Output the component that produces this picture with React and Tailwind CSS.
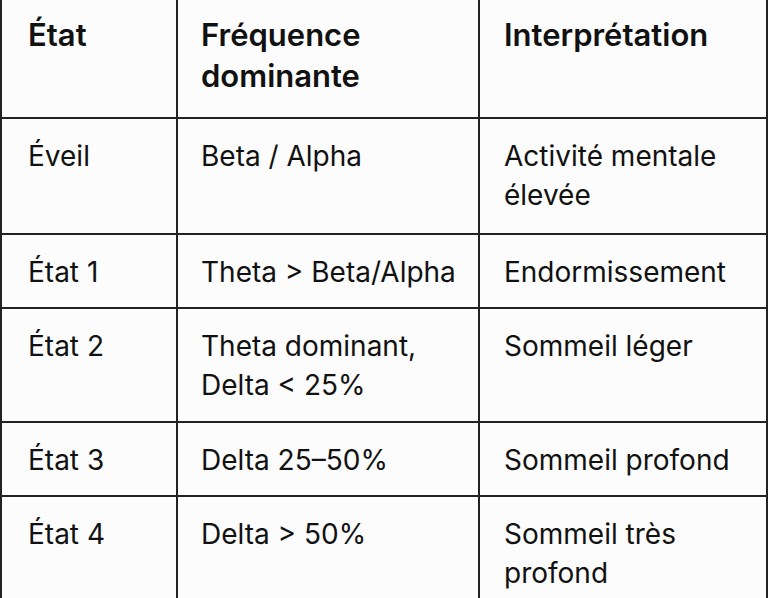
import React from "react";

const rows = [
  { etat: "Éveil", freq: "Beta / Alpha", interp: "Activité mentale élevée", h: "h-[116px]" },
  { etat: "État 1", freq: "Theta > Beta/Alpha", interp: "Endormissement", h: "h-[74px]" },
  { etat: "État 2", freq: "Theta dominant, Delta < 25%", interp: "Sommeil léger", h: "h-[114px]" },
  { etat: "État 3", freq: "Delta 25–50%", interp: "Sommeil profond", h: "h-[74px]" },
  { etat: "État 4", freq: "Delta > 50%", interp: "Sommeil très profond", h: "h-[116px]" },
];

export default function App() {
  return (
    <main className="w-[768px] h-[598px] overflow-hidden bg-[#fcfcfc] text-[#111]" style={{ fontFamily: "Inter, 'Noto Sans', sans-serif" }}>
      <table className="w-[768px] table-fixed border-collapse">
        <colgroup>
          <col className="w-[176px]" />
          <col className="w-[302px]" />
          <col />
        </colgroup>
        <thead>
          {/* header row, top border sits outside the frame */}
          <tr className="h-[118px]">
            <th className="border-2 border-t-0 border-[#222] align-top text-left font-semibold text-[31px] leading-[41px] pl-[26px] pt-[14px]">
              État
            </th>
            <th className="border-2 border-t-0 border-[#222] align-top text-left font-semibold text-[31px] leading-[41px] pl-[23px] pr-2 pt-[14px]">
              Fréquence dominante
            </th>
            <th className="border-2 border-t-0 border-[#222] align-top text-left font-semibold text-[31px] leading-[41px] pl-[24px] pr-2 pt-[14px]">
              Interprétation
            </th>
          </tr>
        </thead>
        <tbody>
          {rows.map((r) => (
            <tr key={r.etat} className={r.h}>
              <td className="border-2 border-[#222] align-top text-[28px] leading-[39px] pl-[26px] pt-[18px]">
                {r.etat}
              </td>
              <td className="border-2 border-[#222] align-top text-[28px] leading-[39px] pl-[23px] pr-1 pt-[18px]">
                {r.freq}
              </td>
              <td className="border-2 border-[#222] align-top text-[28px] leading-[39px] pl-[24px] pr-2 pt-[18px]">
                {r.interp}
              </td>
            </tr>
          ))}
        </tbody>
      </table>
    </main>
  );
}
